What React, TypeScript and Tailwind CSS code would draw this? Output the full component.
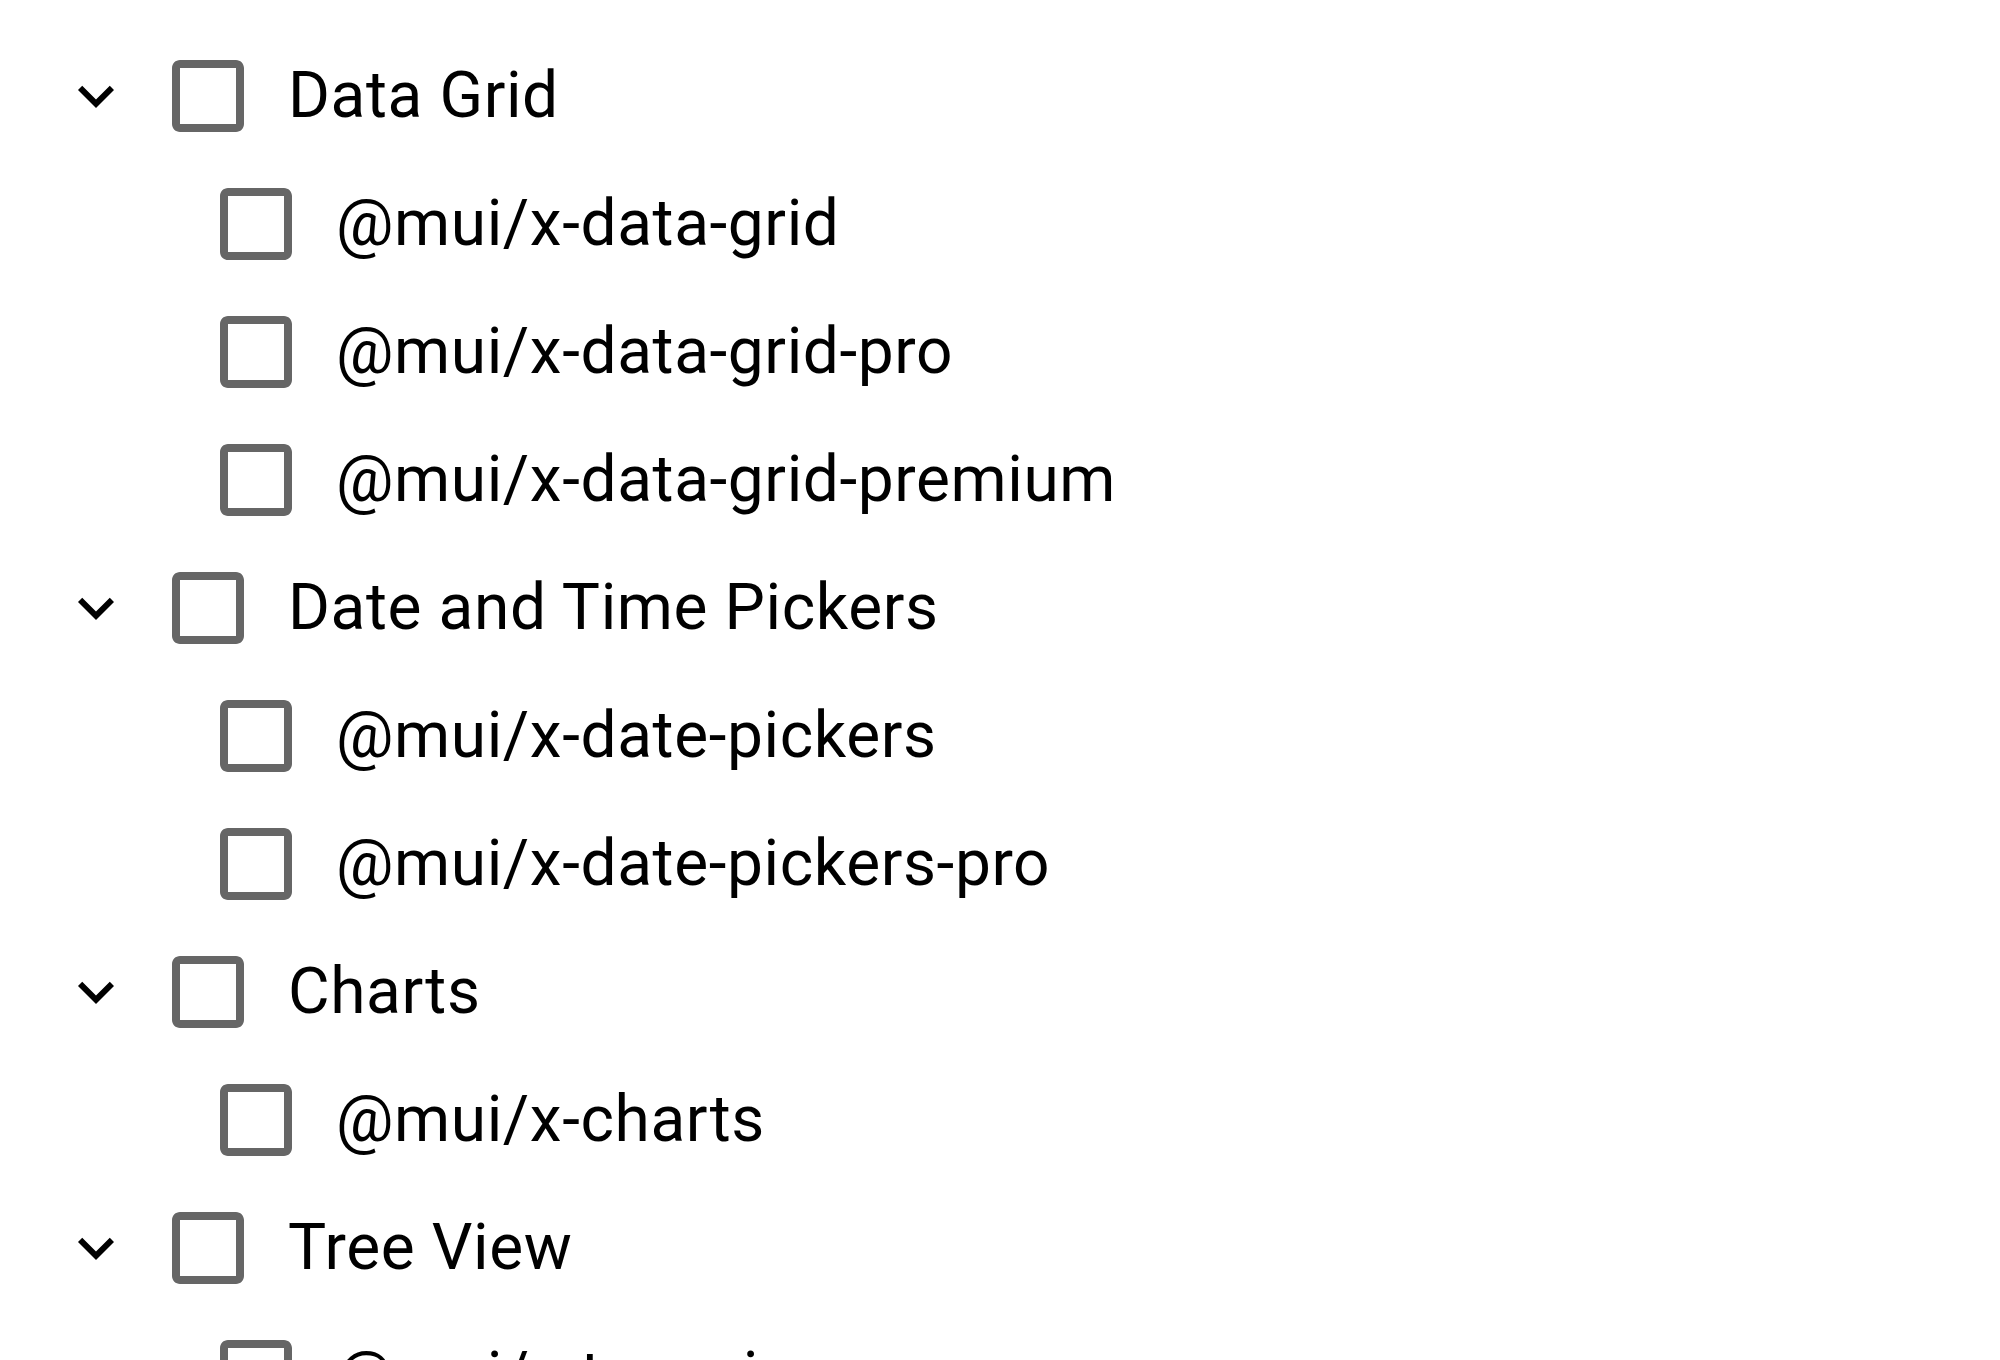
import React from 'react';

type Node = { label: string; children?: string[] };

const tree: Node[] = [
  { label: 'Data Grid', children: ['@mui/x-data-grid', '@mui/x-data-grid-pro', '@mui/x-data-grid-premium'] },
  { label: 'Date and Time Pickers', children: ['@mui/x-date-pickers', '@mui/x-date-pickers-pro'] },
  { label: 'Charts', children: ['@mui/x-charts'] },
  { label: 'Tree View', children: ['@mui/x-tree-view'] },
];

const ExpandMore = () => (
  <svg className="w-[72px] h-[72px] text-black" viewBox="0 0 24 24" fill="currentColor">
    <path d="M16.59 8.59 12 13.17 7.41 8.59 6 10l6 6 6-6z" />
  </svg>
);

const CheckboxBlank = () => (
  <svg className="w-[96px] h-[96px] shrink-0 text-[#666666]" viewBox="0 0 24 24" fill="currentColor">
    <path d="M19 5v14H5V5h14m0-2H5c-1.11 0-2 .9-2 2v14c0 1.1.89 2 2 2h14c1.1 0 2-.9 2-2V5c0-1.1-.9-2-2-2z" />
  </svg>
);

const Row: React.FC<{ label: string; parent?: boolean }> = ({ label, parent }) => (
  <div className={`flex items-center h-[128px] ${parent ? '' : 'pl-[148px]'}`}>
    {parent && (
      <div className="w-[72px] h-[72px] mr-[28px] flex items-center justify-center shrink-0">
        <ExpandMore />
      </div>
    )}
    <CheckboxBlank />
    <span className="ml-[32px] text-[64px] leading-none tracking-[0.00938em] text-black whitespace-nowrap">{label}</span>
  </div>
);

export default function App() {
  return (
    <div className="w-[2000px] h-[1360px] overflow-hidden bg-white pt-[32px] pl-[60px]" style={{ fontFamily: 'Roboto, "Liberation Sans", sans-serif' }}>
      {tree.map(node => (
        <div key={node.label}>
          <Row label={node.label} parent />
          {node.children?.map(c => <Row key={c} label={c} />)}
        </div>
      ))}
    </div>
  );
}
